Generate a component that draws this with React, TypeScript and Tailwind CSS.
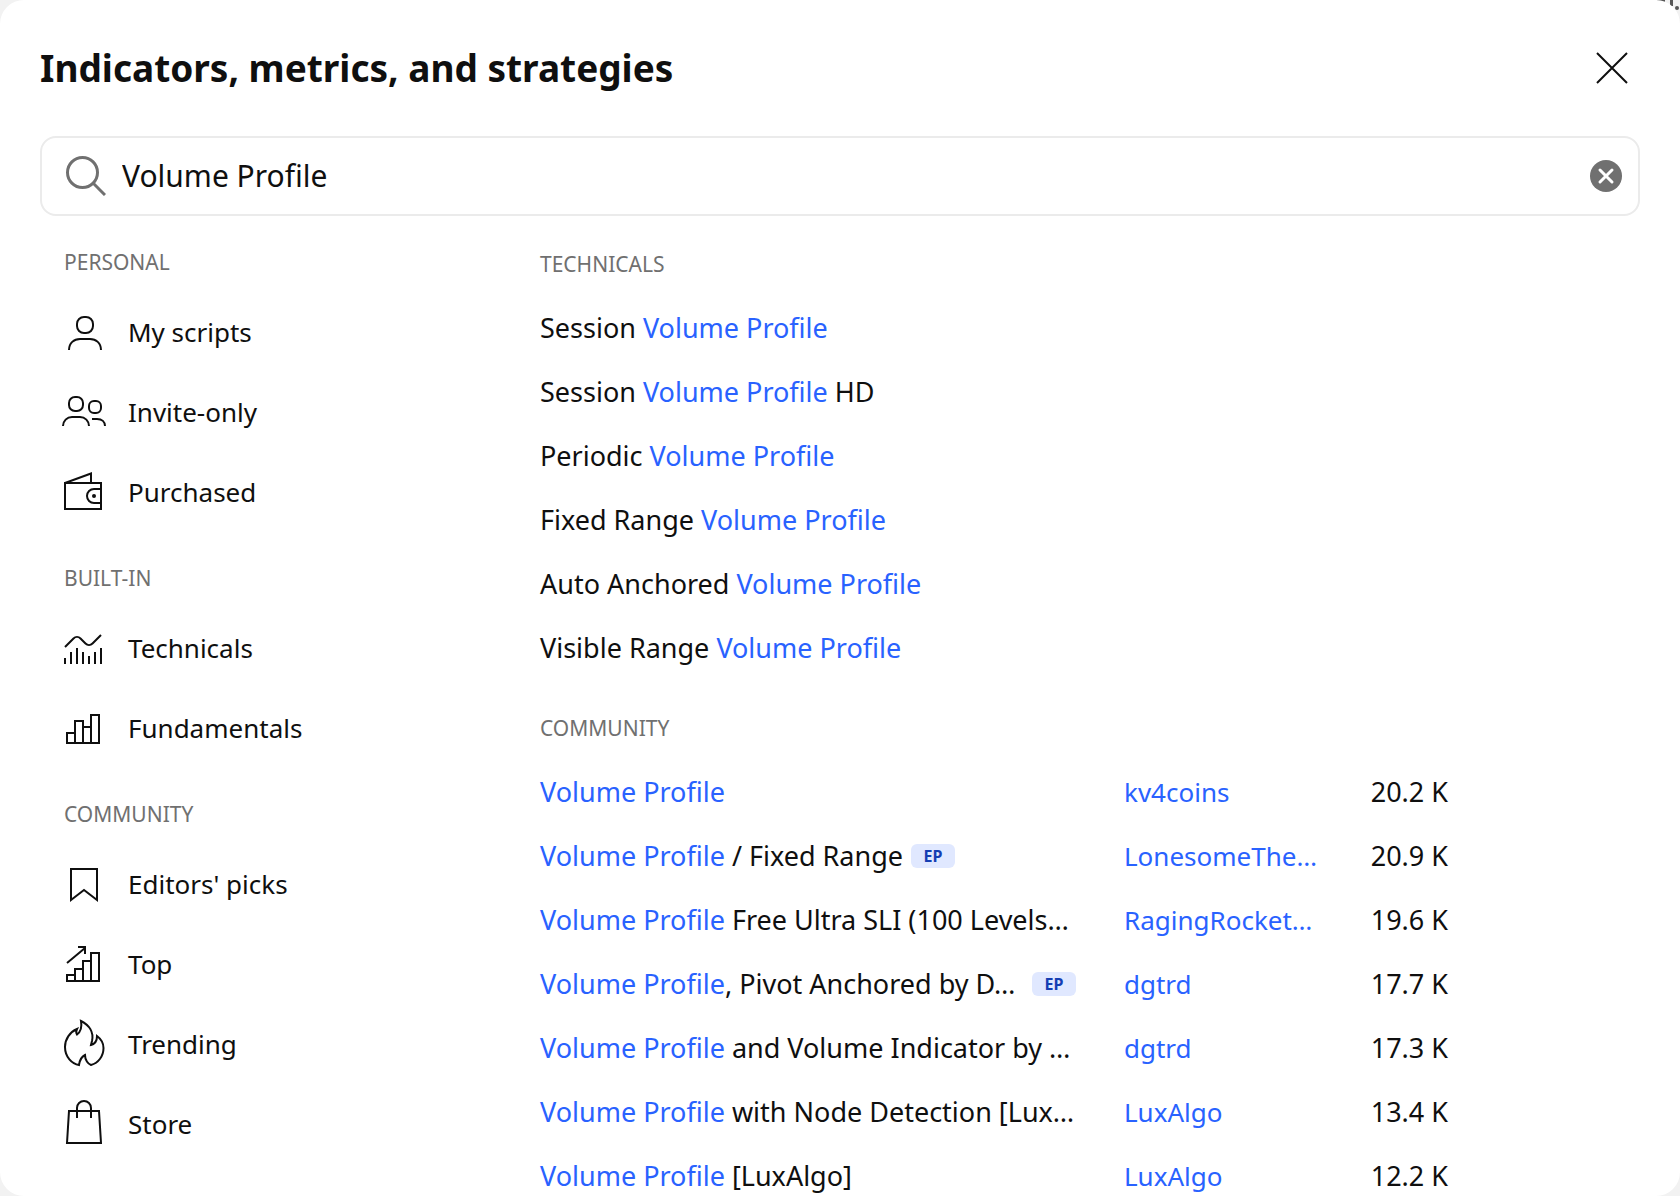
import { useState } from "react"
import type { ReactNode } from "react"

const QUERY = "Volume Profile"

const icons: Record<string, ReactNode> = {
  person: (
    <>
      <rect x="21" y="13" width="16" height="16" rx="7" />
      <path d="M13 46c0-7 5-11 11-11h10c6 0 11 4 11 11" />
    </>
  ),
  people: (
    <>
      <rect x="13" y="13" width="14" height="14" rx="6" />
      <rect x="33" y="17" width="12" height="12" rx="5" />
      <path d="M7 42c0-5 4-9 9-9h8c5 0 9 4 9 9M36 35h5c5 0 8 3 8 7" />
    </>
  ),
  wallet: (
    <>
      <rect x="9" y="19" width="36" height="26" />
      <path d="M9 19l26-9.5V19M45 25h-7a7 7 0 0 0 0 14h7" />
      <circle cx="38" cy="32" r="2" fill="currentColor" stroke="none" />
    </>
  ),
  technicals: (
    <>
      <path d="M9 44v-6M15 44V32M21 44V28M27 44V32M33 44v-8M39 44V32M45 44V28" />
      <path d="M9 27l8.5-8.5c2-2 5-2 7 0l5 5c2 2 5 2 7 0L45 15" />
    </>
  ),
  fundamentals: <path d="M11 43V33h8M19 43V21h8v22M27 27h8M35 43V15h8v28H10" />,
  bookmark: <path d="M15 13h26v31L28 34 15 44z" />,
  top: (
    <>
      <path d="M11 45v-6h8M19 45V33h8M27 45V25h8M35 45V17h8v28H10" />
      <path d="M11 27L29 12M22 11h7v7" />
    </>
  ),
  flame: (
    <path d="M25 5c8 4 13 11 11 20l-1 4c4-1 6-5 6-9 4 3 6.5 7 6.5 12 0 8-5 15-12.500 17-3-1-6-5-6-10-4 2-5.500 6-6 10-7-1-14-8-14-18C9 23 14 16 21 13c-1 2-1 4 0 5.500 4-3 5-8 4-13.500z" />
  ),
  bag: <path d="M13 15h30l2 32H11zM21 22V12a7 7 0 0 1 14 0v10" />,
}

const menu = [
  {
    title: "Personal",
    items: [
      { icon: "person", label: "My scripts" },
      { icon: "people", label: "Invite-only" },
      { icon: "wallet", label: "Purchased" },
    ],
  },
  {
    title: "Built-in",
    items: [
      { icon: "technicals", label: "Technicals" },
      { icon: "fundamentals", label: "Fundamentals" },
    ],
  },
  {
    title: "Community",
    items: [
      { icon: "bookmark", label: "Editors' picks" },
      { icon: "top", label: "Top" },
      { icon: "flame", label: "Trending" },
      { icon: "bag", label: "Store" },
    ],
  },
]

const technicals = [
  "Session Volume Profile",
  "Session Volume Profile HD",
  "Periodic Volume Profile",
  "Fixed Range Volume Profile",
  "Auto Anchored Volume Profile",
  "Visible Range Volume Profile",
]

const community = [
  { name: "Volume Profile", author: "kv4coins", likes: "20.2 K" },
  { name: "Volume Profile / Fixed Range", author: "LonesomeThe…", likes: "20.9 K", pick: true },
  { name: "Volume Profile Free Ultra SLI (100 Levels…", author: "RagingRocket…", likes: "19.6 K" },
  { name: "Volume Profile, Pivot Anchored by D…", author: "dgtrd", likes: "17.7 K", pick: true },
  { name: "Volume Profile and Volume Indicator by …", author: "dgtrd", likes: "17.3 K" },
  { name: "Volume Profile with Node Detection [Lux…", author: "LuxAlgo", likes: "13.4 K" },
  { name: "Volume Profile [LuxAlgo]", author: "LuxAlgo", likes: "12.2 K" },
]

function Highlight({ text }: { text: string }) {
  const [before, after] = text.split(QUERY)
  return (
    <>
      {before}
      <span className="text-[#2962ff]">{QUERY}</span>
      {after}
    </>
  )
}

function SidebarItem({ icon, label }: { icon: string; label: string }) {
  return (
    <li>
      <button type="button" className="flex h-20 w-full items-center gap-4 pl-4 text-left">
        <svg viewBox="0 0 56 56" className="size-14 shrink-0" fill="none" stroke="currentColor" strokeWidth="2">
          {icons[icon]}
        </svg>
        {label}
      </button>
    </li>
  )
}

export default function App() {
  const [search, setSearch] = useState(QUERY)

  return (
    <div className="relative isolate h-screen overflow-hidden bg-[#f2f2f2]">
      {/* chart page showing behind the dialog corner */}
      <svg viewBox="0 0 24 16" className="absolute top-0 right-0 -z-10 h-4 w-6" fill="#555">
        <rect x="1" y="0" width="8" height="2" />
        <rect x="14" y="0" width="3" height="6" />
        <circle cx="21" cy="8" r="2" />
      </svg>

      <div
        role="dialog"
        aria-labelledby="dialog-title"
        className="flex h-full flex-col overflow-hidden rounded-3xl bg-white px-10 font-['Trebuchet_MS','Noto_Sans',sans-serif] text-[26px] leading-8 text-[#0f0f0f]"
      >
        <header className="flex h-[136px] shrink-0 items-center justify-between">
          <h1 id="dialog-title" className="text-[37px] leading-12 font-bold">
            Indicators, metrics, and strategies
          </h1>
          <button type="button" aria-label="Close" className="p-3">
            <svg viewBox="0 0 32 32" className="size-8" fill="none" stroke="currentColor" strokeWidth="2">
              <path d="M1 1l30 30M31 1L1 31" />
            </svg>
          </button>
        </header>

        <div className="flex h-20 shrink-0 items-center rounded-2xl border-2 border-[#ebebeb] pr-4 pl-6">
          <svg viewBox="0 0 40 40" className="size-10 shrink-0 text-[#707070]" fill="none" stroke="currentColor" strokeWidth="3">
            <circle cx="16.5" cy="16.5" r="15" />
            <path d="M27 27l12 12" />
          </svg>
          <input
            type="text"
            aria-label="Search"
            value={search}
            onChange={(e) => setSearch(e.target.value)}
            className="ml-4 min-w-0 flex-1 text-[30px] leading-10 outline-none"
          />
          <button type="button" aria-label="Clear" onClick={() => setSearch("")}>
            <svg viewBox="0 0 32 32" className="size-8">
              <circle cx="16" cy="16" r="16" fill="#707070" />
              <path d="M10 10l12 12M22 10L10 22" stroke="#fff" strokeWidth="3" strokeLinecap="round" />
            </svg>
          </button>
        </div>

        <div className="flex min-h-0 flex-1">
          <nav className="w-[476px] shrink-0">
            {menu.map((section) => (
              <section key={section.title}>
                <h2 className="px-6 pt-[30px] pb-[14px] text-[21px] leading-8 text-[#707070] uppercase">{section.title}</h2>
                <ul>
                  {section.items.map((item) => (
                    <SidebarItem key={item.label} icon={item.icon} label={item.label} />
                  ))}
                </ul>
              </section>
            ))}
          </nav>

          <main className="min-w-0 flex-1 pl-6">
            <h2 className="pt-8 pb-4 text-[21px] leading-8 text-[#707070] uppercase">Technicals</h2>
            <ul>
              {technicals.map((name) => (
                <li key={name}>
                  <button type="button" className="h-16 w-full text-left text-[27px] leading-8">
                    <Highlight text={name} />
                  </button>
                </li>
              ))}
            </ul>

            <h2 className="pt-8 pb-4 text-[21px] leading-8 text-[#707070] uppercase">Community</h2>
            <table>
              <tbody>
                {community.map((script) => (
                  <tr key={script.name} className="h-16 whitespace-nowrap">
                    <td className="w-[584px] py-0 pr-12 pl-0 text-[27px] leading-8">
                      <div className="flex items-center gap-2">
                        <span className={script.name.endsWith("…") ? "flex-1" : ""}>
                          <Highlight text={script.name} />
                        </span>
                        {script.pick && (
                          <span className="flex h-6 w-11 items-center justify-center rounded-md bg-[#e0e8ff] text-base font-bold text-[#143eb3]">
                            EP
                          </span>
                        )}
                      </div>
                    </td>
                    <td className="w-[220px] p-0">
                      <a href="#" className="text-[#2962ff]">
                        {script.author}
                      </a>
                    </td>
                    <td className="w-[104px] p-0 text-right text-[27px] leading-8">{script.likes}</td>
                  </tr>
                ))}
              </tbody>
            </table>
          </main>
        </div>
      </div>
    </div>
  )
}
